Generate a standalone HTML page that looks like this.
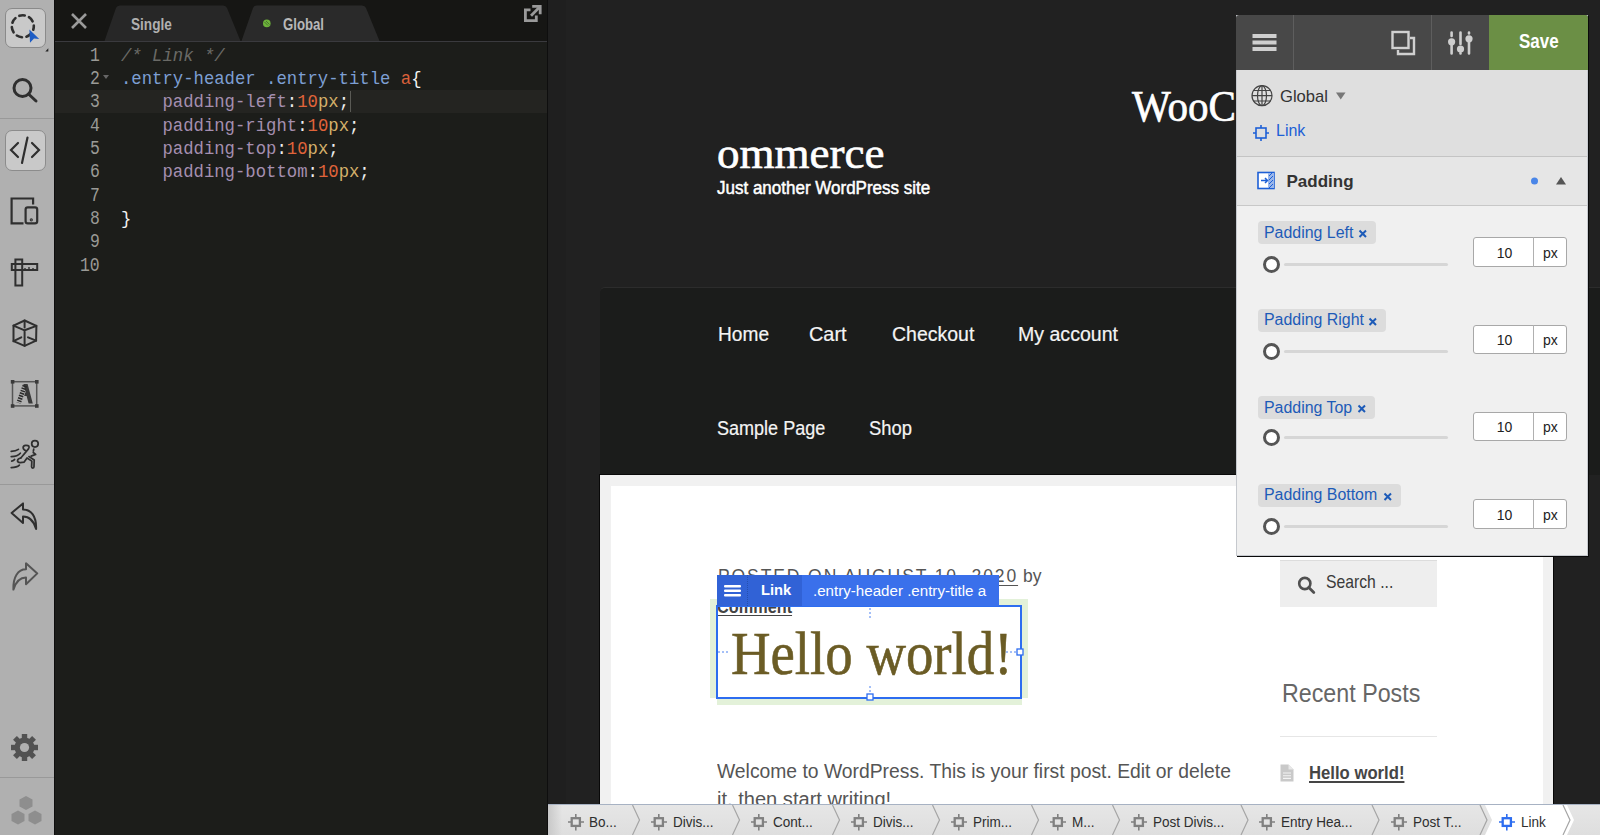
<!DOCTYPE html>
<html><head><meta charset="utf-8">
<style>
*{margin:0;padding:0;box-sizing:border-box}
html,body{width:1600px;height:835px;overflow:hidden;background:#202020;font-family:"Liberation Sans",sans-serif}
.a{position:absolute}
.t{position:absolute;white-space:nowrap;line-height:1}
</style></head>
<body>
<div class="a" style="left:548px;top:0px;width:1052px;height:804px;background:#212121"></div>
<div class="a" style="left:548px;top:0px;width:18px;height:804px;background:#1f1f1f"></div>
<div class="a" style="left:55px;top:0px;width:493px;height:835px;background:#1c1d1a"></div>
<div class="a" style="left:55px;top:0px;width:493px;height:42px;background:#161614;border-bottom:1px solid #3a3a3e"></div>
<div class="a" style="left:547px;top:0px;width:1px;height:835px;background:#0e0e0e"></div>
<svg class="a" style="left:0;top:0" width="548" height="42"><path d="M104.5 41 L116 8 Q117 5.5 120 5.5 L223 5.5 Q226 5.5 227 8 L240.5 41 Z" fill="#272727"/><path d="M241.5 41 L253 8 Q254 5.5 257 5.5 L362 5.5 Q365 5.5 366 8 L379.5 41 Z" fill="#2a2a2a"/><path d="M72 14 L86 28 M86 14 L72 28" stroke="#9a9a9a" stroke-width="2.6"/><g fill="none" stroke="#9a9a9a" stroke-width="2.8"><path d="M530.5 9.8 H525.4 V20.7 H536.3 V15.5"/><path d="M531 15.8 L539.2 7.6"/><path d="M532.2 6.4 H540.2 V14.3"/></g><circle cx="266.8" cy="23.4" r="3.8" fill="#6cb23a"/><path d="M264.5 22 L268 25.5 M266 21 L269.5 24.5" stroke="#3a5a28" stroke-width="0.7"/></svg>
<div class="t" style="left:131.00px;top:15.55px;font-size:17px;color:#b0b0b0;font-family:'Liberation Sans',sans-serif;font-weight:700;transform:scale(0.8000,1.0000);transform-origin:0 14.45px;">Single</div>
<div class="t" style="left:283.00px;top:15.55px;font-size:17px;color:#b8b8b8;font-family:'Liberation Sans',sans-serif;font-weight:700;transform:scale(0.7750,1.0000);transform-origin:0 14.45px;">Global</div>
<div class="a" style="left:55px;top:90px;width:492px;height:23px;background:#242421"></div>
<div class="t" style="left:89.86px;top:47.87px;font-size:17.27px;color:#9a9a96;font-family:'Liberation Mono',monospace;transform:scale(0.9500,1.1500);transform-origin:0 13.13px;">1</div>
<div class="t" style="left:121.00px;top:47.87px;font-size:17.27px;color:#ddd;font-family:'Liberation Mono',monospace;transform:scale(1.0000,1.1000);transform-origin:0 13.13px;white-space:pre;"><span style="color:#6a6a66;font-style:italic">/* Link */</span></div>
<div class="t" style="left:89.86px;top:71.17px;font-size:17.27px;color:#9a9a96;font-family:'Liberation Mono',monospace;transform:scale(0.9500,1.1500);transform-origin:0 13.13px;">2</div>
<div class="t" style="left:121.00px;top:71.17px;font-size:17.27px;color:#ddd;font-family:'Liberation Mono',monospace;transform:scale(1.0000,1.1000);transform-origin:0 13.13px;white-space:pre;"><span style="color:#7d9fd3">.entry-header .entry-title </span><span style="color:#d9603b">a</span><span style="color:#f2f2f2">{</span></div>
<div class="t" style="left:89.86px;top:94.47px;font-size:17.27px;color:#9a9a96;font-family:'Liberation Mono',monospace;transform:scale(0.9500,1.1500);transform-origin:0 13.13px;">3</div>
<div class="t" style="left:121.00px;top:94.47px;font-size:17.27px;color:#ddd;font-family:'Liberation Mono',monospace;transform:scale(1.0000,1.1000);transform-origin:0 13.13px;white-space:pre;">    <span style="color:#a58fb0">padding-left</span><span style="color:#eee">:</span><span style="color:#e0643a">10</span><span style="color:#d4b06a">px</span><span style="color:#eee">;</span></div>
<div class="t" style="left:89.86px;top:117.77px;font-size:17.27px;color:#9a9a96;font-family:'Liberation Mono',monospace;transform:scale(0.9500,1.1500);transform-origin:0 13.13px;">4</div>
<div class="t" style="left:121.00px;top:117.77px;font-size:17.27px;color:#ddd;font-family:'Liberation Mono',monospace;transform:scale(1.0000,1.1000);transform-origin:0 13.13px;white-space:pre;">    <span style="color:#a58fb0">padding-right</span><span style="color:#eee">:</span><span style="color:#e0643a">10</span><span style="color:#d4b06a">px</span><span style="color:#eee">;</span></div>
<div class="t" style="left:89.86px;top:141.07px;font-size:17.27px;color:#9a9a96;font-family:'Liberation Mono',monospace;transform:scale(0.9500,1.1500);transform-origin:0 13.13px;">5</div>
<div class="t" style="left:121.00px;top:141.07px;font-size:17.27px;color:#ddd;font-family:'Liberation Mono',monospace;transform:scale(1.0000,1.1000);transform-origin:0 13.13px;white-space:pre;">    <span style="color:#a58fb0">padding-top</span><span style="color:#eee">:</span><span style="color:#e0643a">10</span><span style="color:#d4b06a">px</span><span style="color:#eee">;</span></div>
<div class="t" style="left:89.86px;top:164.37px;font-size:17.27px;color:#9a9a96;font-family:'Liberation Mono',monospace;transform:scale(0.9500,1.1500);transform-origin:0 13.13px;">6</div>
<div class="t" style="left:121.00px;top:164.37px;font-size:17.27px;color:#ddd;font-family:'Liberation Mono',monospace;transform:scale(1.0000,1.1000);transform-origin:0 13.13px;white-space:pre;">    <span style="color:#a58fb0">padding-bottom</span><span style="color:#eee">:</span><span style="color:#e0643a">10</span><span style="color:#d4b06a">px</span><span style="color:#eee">;</span></div>
<div class="t" style="left:89.86px;top:187.67px;font-size:17.27px;color:#9a9a96;font-family:'Liberation Mono',monospace;transform:scale(0.9500,1.1500);transform-origin:0 13.13px;">7</div>
<div class="t" style="left:89.86px;top:210.97px;font-size:17.27px;color:#9a9a96;font-family:'Liberation Mono',monospace;transform:scale(0.9500,1.1500);transform-origin:0 13.13px;">8</div>
<div class="t" style="left:121.00px;top:210.97px;font-size:17.27px;color:#ddd;font-family:'Liberation Mono',monospace;transform:scale(1.0000,1.1000);transform-origin:0 13.13px;white-space:pre;"><span style="color:#f2f2f2">}</span></div>
<div class="t" style="left:89.86px;top:234.27px;font-size:17.27px;color:#9a9a96;font-family:'Liberation Mono',monospace;transform:scale(0.9500,1.1500);transform-origin:0 13.13px;">9</div>
<div class="t" style="left:80.02px;top:257.57px;font-size:17.27px;color:#9a9a96;font-family:'Liberation Mono',monospace;transform:scale(0.9500,1.1500);transform-origin:0 13.13px;">10</div>
<svg class="a" style="left:0;top:0" width="120" height="90"><path d="M103 75 L109 75 L106 79 Z" fill="#666"/></svg>
<div class="a" style="left:350px;top:91px;width:1px;height:21px;background:#5a5a55"></div>
<div class="a" style="left:0px;top:0px;width:54px;height:835px;background:#b0b0b0"></div>
<div class="a" style="left:54px;top:0px;width:1.2px;height:835px;background:#0e0e0e"></div>
<div class="a" style="left:0px;top:118px;width:54px;height:1px;background:#999"></div>
<div class="a" style="left:0px;top:484px;width:54px;height:1px;background:#999"></div>
<div class="a" style="left:0px;top:777px;width:54px;height:1px;background:#999"></div>
<div class="a" style="left:4.5px;top:7.8px;width:41px;height:40.5px;background:#c9c9c9;border:1.3px solid #8a8a8a;border-radius:7px"></div>
<div class="a" style="left:5px;top:130px;width:41px;height:41px;background:#c9c9c9;border:1px solid #8c8c8c;border-radius:7px"></div>
<svg class="a" style="left:0;top:0" width="54" height="835">
<g fill="none" stroke="#2f2f2f" stroke-width="2.4" stroke-linecap="round">
 <circle cx="22.8" cy="26.3" r="11" stroke-dasharray="5.5 4.5" stroke-dashoffset="2" stroke-width="2.6"/>
</g>
<path d="M29.4 29.6 L39.2 38.9 L34 38.6 L30 42.7 Z" fill="#1d5cc4"/>
<path d="M45.3 51.5 L48.3 48.2 L48.3 51.5 Z" fill="#222"/>
<g fill="none" stroke="#2f2f2f" stroke-width="3">
 <circle cx="22.5" cy="88" r="8.5"/><path d="M28.5 94 L36 101" stroke-linecap="round"/>
</g>
<g fill="none" stroke="#2f2f2f" stroke-width="2.2" stroke-linecap="round">
 <path d="M18 143 L11 150 L18 157"/><path d="M32 143 L39 150 L32 157"/><path d="M27.5 137.5 L22 163"/>
</g>
<g fill="none" stroke="#2f2f2f" stroke-width="2.2">
 <path d="M33.1 204.4 V198.5 H11.6 V223.4 H23.5"/>
 <rect x="25.6" y="207.4" width="11.6" height="16" rx="2.2"/>
 <circle cx="31.3" cy="219.8" r="0.5" fill="#2f2f2f"/>
</g>
<g fill="none" stroke="#2f2f2f" stroke-width="2">
 <rect x="15.4" y="259.5" width="6.8" height="26"/>
 <rect x="11.8" y="264" width="25.4" height="6"/>
 <path d="M25 270 V268 M29 270 V267 M33 270 V268" stroke-width="1.4"/>
</g>
<g fill="none" stroke="#2f2f2f" stroke-width="2" stroke-linejoin="round" stroke-linecap="round">
 <path d="M24.6 320.5 L36.4 325.9 L36.1 340.7 L24.6 345.8 L13.5 341.2 L13.5 325.6 Z"/>
 <path d="M13.5 325.6 L24.6 330.3 L36.4 325.9 M24.6 330.3 V345.8 M24.6 320.5 V327.5 M13.5 341.2 L21.3 337.3 M36.1 340.7 L28 337.3"/>
</g>
<g fill="none" stroke="#555" stroke-width="1.5">
 <rect x="12.5" y="381.7" width="24.2" height="24.2"/>
</g>
<g fill="#3a3a3a">
 <rect x="10.8" y="380" width="3.6" height="3.6"/><rect x="35" y="380" width="3.6" height="3.6"/><rect x="10.8" y="404.2" width="3.6" height="3.6"/><rect x="35" y="404.2" width="3.6" height="3.6"/>
 <path d="M23.4 384 L27.6 384 L32.8 403.6 L28.6 403.6 L26.6 396 L24.2 396 L25.2 392.5 L25.8 392.5 Z"/>
</g>
<path d="M24.8 385.5 L18.6 403" stroke="#2a2a2a" stroke-width="4.6" stroke-dasharray="1.5 1.1" fill="none"/>
<g fill="none" stroke="#2f2f2f" stroke-width="36" stroke-linecap="round" stroke-linejoin="round" transform="translate(5 435) scale(0.0479)">
 <circle cx="625" cy="185" r="68"/>
 <path d="M600 295 L592 335 M590 365 L640 405 L545 440"/>
 <path d="M440 330 C 360 300, 360 220, 430 215 C 500 210, 520 240, 490 290 L 330 480"/>
 <path d="M330 480 C 240 500, 240 580, 320 575 L 400 565 L 460 480 L 560 545 L 555 665 C 555 700, 605 700, 605 665 L 610 520 L 500 450"/>
 <path d="M130 340 C 180 340, 240 330, 280 300 M130 450 C 190 450, 270 440, 320 380 M140 545 C 170 540, 190 525, 200 510 M130 680 C 190 680, 260 670, 300 630"/>
</g>
<g fill="none" stroke="#2f2f2f" stroke-width="2" stroke-linejoin="round">
 <path d="M11.6 513 L23 503.4 L23 509.4 C31 509.4 36.6 516 36.1 529 C33.5 520.5 29 516.6 23 516.6 L23 523 Z"/>
</g>
<g fill="none" stroke="#555" stroke-width="2" stroke-linejoin="round">
 <path d="M37.3 573.4 L26 563.3 L26 569.3 C18 569.3 12.9 577 13.4 589.6 C16 581.5 20.5 577.6 26 577.6 L26 584.2 Z"/>
</g>
<g fill="#525252" transform="translate(24.5 747.5)"><circle r="10"/><rect x="-2.7" y="-13.5" width="5.4" height="6" transform="rotate(0)"/><rect x="-2.7" y="-13.5" width="5.4" height="6" transform="rotate(45)"/><rect x="-2.7" y="-13.5" width="5.4" height="6" transform="rotate(90)"/><rect x="-2.7" y="-13.5" width="5.4" height="6" transform="rotate(135)"/><rect x="-2.7" y="-13.5" width="5.4" height="6" transform="rotate(180)"/><rect x="-2.7" y="-13.5" width="5.4" height="6" transform="rotate(225)"/><rect x="-2.7" y="-13.5" width="5.4" height="6" transform="rotate(270)"/><rect x="-2.7" y="-13.5" width="5.4" height="6" transform="rotate(315)"/><circle r="4.6" fill="#b0b0b0"/></g>
<g fill="#8e8e8e">
 <path d="M26 796 L32.5 799.5 V806.5 L26 810 L19.5 806.5 V799.5 Z"/>
 <path d="M18 810.5 L24.5 814 V821 L18 824.5 L11.5 821 V814 Z"/>
 <path d="M35 810.5 L41.5 814 V821 L35 824.5 L28.5 821 V814 Z"/>
</g>
</svg>
<div class="t" style="left:1132.00px;top:84.25px;font-size:45px;color:#ffffff;font-family:'Liberation Serif',serif;transform:scale(0.9130,1.0000);transform-origin:0 37.35px;-webkit-text-stroke:0.7px #fff;">WooC</div>
<div class="t" style="left:717.00px;top:130.95px;font-size:45px;color:#ffffff;font-family:'Liberation Serif',serif;transform:scale(1.0000,1.0000);transform-origin:0 37.35px;-webkit-text-stroke:0.7px #fff;">ommerce</div>
<div class="t" style="left:717.00px;top:179.44px;font-size:18.3px;color:#ffffff;font-family:'Liberation Sans',sans-serif;transform:scale(0.9300,1.0000);transform-origin:0 15.55px;-webkit-text-stroke:0.5px #fff;">Just another WordPress site</div>
<div class="a" style="left:600px;top:287px;width:1000px;height:188px;background:#1b1c1b;border-top:1px solid #2c2c2c;border-top-left-radius:5px"></div>
<div class="t" style="left:717.50px;top:324.07px;font-size:20.5px;color:#f4f4f4;font-family:'Liberation Sans',sans-serif;transform:scale(0.9335,1.0000);transform-origin:0 17.43px;-webkit-text-stroke:0.2px #f4f4f4;">Home</div>
<div class="t" style="left:809.00px;top:324.07px;font-size:20.5px;color:#f4f4f4;font-family:'Liberation Sans',sans-serif;transform:scale(0.9704,1.0000);transform-origin:0 17.43px;-webkit-text-stroke:0.2px #f4f4f4;">Cart</div>
<div class="t" style="left:891.50px;top:324.07px;font-size:20.5px;color:#f4f4f4;font-family:'Liberation Sans',sans-serif;transform:scale(0.9502,1.0000);transform-origin:0 17.43px;-webkit-text-stroke:0.2px #f4f4f4;">Checkout</div>
<div class="t" style="left:1018.00px;top:324.07px;font-size:20.5px;color:#f4f4f4;font-family:'Liberation Sans',sans-serif;transform:scale(0.9537,1.0000);transform-origin:0 17.43px;-webkit-text-stroke:0.2px #f4f4f4;">My account</div>
<div class="t" style="left:717.00px;top:418.38px;font-size:20.5px;color:#f4f4f4;font-family:'Liberation Sans',sans-serif;transform:scale(0.8798,1.0000);transform-origin:0 17.43px;-webkit-text-stroke:0.2px #f4f4f4;">Sample Page</div>
<div class="t" style="left:869.00px;top:418.38px;font-size:20.5px;color:#f4f4f4;font-family:'Liberation Sans',sans-serif;transform:scale(0.8983,1.0000);transform-origin:0 17.43px;-webkit-text-stroke:0.2px #f4f4f4;">Shop</div>
<div class="a" style="left:600px;top:474px;width:953px;height:330px;background:#f1f1f1;border-top:1px solid #0a0a0a"></div>
<div class="a" style="left:611px;top:486px;width:932px;height:318px;background:#ffffff"></div>
<div class="a" style="left:599px;top:474px;width:1.3px;height:330px;background:#080808"></div>
<div class="t" style="left:718.00px;top:567.62px;font-size:17.5px;color:#555555;font-family:'Liberation Sans',sans-serif;letter-spacing:1.9px;">POSTED ON <span style="text-decoration:underline;text-underline-offset:3px">AUGUST 10, 2020</span><span style="letter-spacing:0"> by</span></div>
<div class="a" style="left:710px;top:599px;width:318px;height:99px;background:#e3f1d9"></div>
<div class="a" style="left:717px;top:698px;width:305px;height:7px;background:#e3f1d9"></div>
<div class="a" style="left:717px;top:606px;width:305px;height:93px;background:#ffffff"></div>
<div class="t" style="left:717.00px;top:598.62px;font-size:17.5px;color:#444;font-family:'Liberation Sans',sans-serif;font-weight:700;transform:scale(0.9300,1.0000);transform-origin:0 14.88px;"><span style="text-decoration:underline;text-underline-offset:2px">Comment</span></div>
<div class="t" style="left:730.50px;top:622.57px;font-size:61px;color:#6b5c25;font-family:'Liberation Serif',serif;transform:scale(0.8980,1.0000);transform-origin:0 50.63px;-webkit-text-stroke:0.6px #6b5c25;">Hello world!</div>
<div class="a" style="left:716px;top:605px;width:306px;height:94px;border:2.5px solid #2d6df0"></div>
<svg class="a" style="left:700px;top:590px" width="340" height="120">
<g stroke="#4a80f0" stroke-width="1" stroke-dasharray="2 2" fill="none">
<path d="M170 18 V28"/><path d="M170 96 V106"/><path d="M18 62 H30"/><path d="M306 62 H318"/>
</g>
<rect x="317" y="59" width="6" height="6" fill="#fff" stroke="#2d6df0" stroke-width="1.3"/>
<rect x="167" y="104" width="6" height="6" fill="#fff" stroke="#2d6df0" stroke-width="1.3"/>
</svg>
<div class="a" style="left:717px;top:574.5px;width:281.5px;height:31.5px;background:#3a70eb"></div>
<div class="a" style="left:717px;top:574.5px;width:84.5px;height:31.5px;background:#3162d6"></div>
<div class="a" style="left:747px;top:575px;width:1px;height:31px;border-left:1px dotted #2550b0"></div>
<svg class="a" style="left:717px;top:575px" width="32" height="31"><g fill="#fff"><rect x="7" y="10" width="17" height="2.6" rx="1"/><rect x="7" y="14.5" width="17" height="2.6" rx="1"/><rect x="7" y="19" width="17" height="2.6" rx="1"/></g></svg>
<div class="t" style="left:761.00px;top:582.33px;font-size:15.5px;color:#ffffff;font-family:'Liberation Sans',sans-serif;font-weight:700;transform:scale(0.9500,1.0000);transform-origin:0 13.17px;">Link</div>
<div class="t" style="left:812.50px;top:583.60px;font-size:14px;color:#ffffff;font-family:'Liberation Sans',sans-serif;transform:scale(1.0800,1.0000);transform-origin:0 11.90px;">.entry-header .entry-title a</div>
<div class="t" style="left:717.00px;top:761.62px;font-size:19.5px;color:#555555;font-family:'Liberation Sans',sans-serif;transform:scale(0.9900,1.0000);transform-origin:0 16.57px;">Welcome to WordPress. This is your first post. Edit or delete</div>
<div class="t" style="left:717.00px;top:790.42px;font-size:19.5px;color:#555555;font-family:'Liberation Sans',sans-serif;transform:scale(1.0300,1.0000);transform-origin:0 16.57px;">it, then start writing!</div>
<div class="a" style="left:1280px;top:560px;width:157px;height:47px;background:#eeeeee;border-top:1px solid #dcdcdc"></div>
<svg class="a" style="left:1290px;top:570px" width="30" height="30"><circle cx="14.8" cy="13.5" r="5.6" fill="none" stroke="#505050" stroke-width="2.6"/><path d="M18.8 17.6 L23.8 22.6" stroke="#505050" stroke-width="2.8" stroke-linecap="round"/></svg>
<div class="t" style="left:1325.50px;top:574.07px;font-size:17.8px;color:#3a3a3a;font-family:'Liberation Sans',sans-serif;transform:scale(0.8850,1.0000);transform-origin:0 15.13px;">Search ...</div>
<div class="t" style="left:1281.50px;top:680.55px;font-size:25px;color:#666666;font-family:'Liberation Sans',sans-serif;transform:scale(0.9300,1.0000);transform-origin:0 21.25px;">Recent Posts</div>
<div class="a" style="left:1280px;top:736px;width:157px;height:1px;background:#e6e6e6"></div>
<svg class="a" style="left:1280px;top:764px" width="15" height="19"><path d="M0.5 0.5 H8.5 L13.5 5.5 V17.5 H0.5 Z" fill="#c9c9c9"/><path d="M8.5 0.5 V5.5 H13.5" fill="#e8e8e8"/><path d="M3 9 H11 M3 11.7 H11 M3 14.4 H11" stroke="#f4f4f4" stroke-width="1.1"/></svg>
<div class="t" style="left:1309.00px;top:765.12px;font-size:17.5px;color:#454545;font-family:'Liberation Sans',sans-serif;font-weight:700;transform:scale(0.9530,1.0000);transform-origin:0 14.88px;"><span style="text-decoration:underline;text-underline-offset:2px;text-decoration-thickness:1.5px">Hello world!</span></div>
<div class="a" style="left:1553px;top:486px;width:47px;height:318px;background:#212121"></div>
<div class="a" style="left:1543px;top:486px;width:10px;height:318px;background:#f1f1f1"></div>
<div class="a" style="left:1553px;top:474px;width:1.3px;height:330px;background:#080808"></div>
<div class="a" style="left:1236px;top:15px;width:352px;height:541px;background:#f0f0f0;border:1px solid #c6c9ce;border-top:none;box-shadow:1px 1px 0 #0a0a0a"></div>
<div class="a" style="left:1236px;top:15px;width:352px;height:55px;background:#484848;border-radius:3px 3px 0 0"></div>
<div class="a" style="left:1292.5px;top:15px;width:1.5px;height:55px;background:#5e5e5e"></div>
<div class="a" style="left:1430.5px;top:15px;width:1.5px;height:55px;background:#5e5e5e"></div>
<div class="a" style="left:1489px;top:15px;width:99px;height:55px;background:#6b8f45;border-top-right-radius:3px"></div>
<svg class="a" style="left:1236px;top:15px" width="352" height="56">
<g fill="#cfcfcf"><rect x="16.5" y="19" width="24" height="4"/><rect x="16.5" y="25.5" width="24" height="4"/><rect x="16.5" y="32" width="24" height="4"/></g>
<g fill="none" stroke="#d0d0d0" stroke-width="2.4">
<rect x="156.5" y="17" width="16" height="16"/>
<path d="M174 23 H178 V39 H162 V35"/>
</g>
<g stroke="#cfcfcf" stroke-width="2.6" stroke-linecap="round" fill="#cfcfcf">
<path d="M215.6 17.5 V21 M215.6 30 V38.5"/><circle cx="215.6" cy="26.8" r="3.6" stroke="none"/>
<path d="M224.5 17.5 V29 M224.5 38 V38.5"/><circle cx="224.5" cy="34" r="3.6" stroke="none"/>
<path d="M233 17.5 V18.5 M233 27 V38.5"/><circle cx="233" cy="23.8" r="3.6" stroke="none"/>
</g>
</svg>
<div class="t" style="left:1518.60px;top:31.72px;font-size:19.5px;color:#ffffff;font-family:'Liberation Sans',sans-serif;font-weight:700;transform:scale(0.8700,1.0000);transform-origin:0 16.57px;">Save</div>
<div class="a" style="left:1237px;top:70px;width:350px;height:86px;background:#dfdfdf"></div>
<div class="a" style="left:1237px;top:156px;width:350px;height:1px;background:#c4c4c4"></div>
<div class="a" style="left:1237px;top:157px;width:350px;height:48px;background:#e6e6e6"></div>
<div class="a" style="left:1237px;top:205px;width:350px;height:1px;background:#c8c8c8"></div>
<svg class="a" style="left:1236px;top:70px" width="352" height="140">
<g fill="none" stroke="#444" stroke-width="1.2">
<circle cx="26" cy="25.7" r="10"/><ellipse cx="26" cy="25.7" rx="4.5" ry="10"/><path d="M26 15.7 V35.7 M16 25.7 H36 M17.5 20.5 H34.5 M17.5 31 H34.5"/>
</g>
<path d="M100 22.6 L109.5 22.6 L104.75 29.5 Z" fill="#777"/>
<g fill="none" stroke="#1d5fd6" stroke-width="1.6">
<rect x="20" y="58" width="10" height="10"/>
<path d="M17 63 H20 M30 63 H33 M25 55 V58 M25 68 V71"/>
</g>
<g>
<rect x="22" y="102.5" width="16" height="16" fill="#fff" stroke="#1d5fd6" stroke-width="1.6"/>
<path d="M32 103 L38 103 L38 118 L32 118 Z" fill="#9ab6ea"/>
<path d="M33 106 L37 102 M33 110 L37 106 M33 114 L37 110 M33 118 L37 114" stroke="#1d5fd6" stroke-width="1"/>
<path d="M25 110.5 H31 M29 108 L31.5 110.5 L29 113" stroke="#1d5fd6" stroke-width="1.5" fill="none"/>
</g>
<circle cx="298.5" cy="111" r="3.5" fill="#4a86e8"/>
<path d="M320 114.5 L330 114.5 L325 107 Z" fill="#555"/>
</svg>
<div class="t" style="left:1280.00px;top:87.55px;font-size:17px;color:#333333;font-family:'Liberation Sans',sans-serif;transform:scale(0.9770,1.0000);transform-origin:0 14.45px;">Global</div>
<div class="t" style="left:1276.00px;top:123.20px;font-size:16px;color:#1d5fd6;font-family:'Liberation Sans',sans-serif;">Link</div>
<div class="t" style="left:1286.50px;top:172.55px;font-size:17px;color:#333333;font-family:'Liberation Sans',sans-serif;font-weight:700;">Padding</div>
<div class="a" style="left:1258px;top:221.2px;width:118px;height:23px;background:#dcdcdc;border-radius:4px"></div>
<div class="t" style="left:1263.50px;top:224.60px;font-size:16px;color:#1d5bb8;font-family:'Liberation Sans',sans-serif;transform:scale(0.9940,1.0000);transform-origin:0 13.60px;">Padding Left</div>
<svg class="a" style="left:1358px;top:229.2px" width="10" height="10"><path d="M1.5 1.5 L8 8 M8 1.5 L1.5 8" stroke="#1d5bb8" stroke-width="2"/></svg>
<div class="a" style="left:1284px;top:262.8px;width:164px;height:3px;background:#d6d6d6;border-radius:2px"></div>
<div class="a" style="left:1262.5px;top:255.8px;width:17px;height:17px;background:#fff;border:3px solid #555;border-radius:50%"></div>
<div class="a" style="left:1473px;top:237.2px;width:94px;height:29.4px;background:#fff;border:1.2px solid #a8a8a8;border-radius:3px"></div>
<div class="a" style="left:1533px;top:237.2px;width:1.2px;height:29.4px;background:#b0b0b0"></div>
<div class="t" style="left:1496.80px;top:245.60px;font-size:14px;color:#222;font-family:'Liberation Sans',sans-serif;">10</div>
<div class="t" style="left:1543.00px;top:245.60px;font-size:14px;color:#222;font-family:'Liberation Sans',sans-serif;">px</div>
<div class="a" style="left:1258px;top:308.8px;width:128px;height:23px;background:#dcdcdc;border-radius:4px"></div>
<div class="t" style="left:1263.50px;top:312.20px;font-size:16px;color:#1d5bb8;font-family:'Liberation Sans',sans-serif;transform:scale(0.9940,1.0000);transform-origin:0 13.60px;">Padding Right</div>
<svg class="a" style="left:1368px;top:316.8px" width="10" height="10"><path d="M1.5 1.5 L8 8 M8 1.5 L1.5 8" stroke="#1d5bb8" stroke-width="2"/></svg>
<div class="a" style="left:1284px;top:350.0px;width:164px;height:3px;background:#d6d6d6;border-radius:2px"></div>
<div class="a" style="left:1262.5px;top:343.0px;width:17px;height:17px;background:#fff;border:3px solid #555;border-radius:50%"></div>
<div class="a" style="left:1473px;top:324.5px;width:94px;height:29.4px;background:#fff;border:1.2px solid #a8a8a8;border-radius:3px"></div>
<div class="a" style="left:1533px;top:324.5px;width:1.2px;height:29.4px;background:#b0b0b0"></div>
<div class="t" style="left:1496.80px;top:332.90px;font-size:14px;color:#222;font-family:'Liberation Sans',sans-serif;">10</div>
<div class="t" style="left:1543.00px;top:332.90px;font-size:14px;color:#222;font-family:'Liberation Sans',sans-serif;">px</div>
<div class="a" style="left:1258px;top:396.4px;width:117px;height:23px;background:#dcdcdc;border-radius:4px"></div>
<div class="t" style="left:1263.50px;top:399.80px;font-size:16px;color:#1d5bb8;font-family:'Liberation Sans',sans-serif;transform:scale(0.9940,1.0000);transform-origin:0 13.60px;">Padding Top</div>
<svg class="a" style="left:1357px;top:404.4px" width="10" height="10"><path d="M1.5 1.5 L8 8 M8 1.5 L1.5 8" stroke="#1d5bb8" stroke-width="2"/></svg>
<div class="a" style="left:1284px;top:436.4px;width:164px;height:3px;background:#d6d6d6;border-radius:2px"></div>
<div class="a" style="left:1262.5px;top:429.4px;width:17px;height:17px;background:#fff;border:3px solid #555;border-radius:50%"></div>
<div class="a" style="left:1473px;top:411.8px;width:94px;height:29.4px;background:#fff;border:1.2px solid #a8a8a8;border-radius:3px"></div>
<div class="a" style="left:1533px;top:411.8px;width:1.2px;height:29.4px;background:#b0b0b0"></div>
<div class="t" style="left:1496.80px;top:420.20px;font-size:14px;color:#222;font-family:'Liberation Sans',sans-serif;">10</div>
<div class="t" style="left:1543.00px;top:420.20px;font-size:14px;color:#222;font-family:'Liberation Sans',sans-serif;">px</div>
<div class="a" style="left:1258px;top:484px;width:143px;height:23px;background:#dcdcdc;border-radius:4px"></div>
<div class="t" style="left:1263.50px;top:487.40px;font-size:16px;color:#1d5bb8;font-family:'Liberation Sans',sans-serif;transform:scale(0.9940,1.0000);transform-origin:0 13.60px;">Padding Bottom</div>
<svg class="a" style="left:1383px;top:492px" width="10" height="10"><path d="M1.5 1.5 L8 8 M8 1.5 L1.5 8" stroke="#1d5bb8" stroke-width="2"/></svg>
<div class="a" style="left:1284px;top:524.5px;width:164px;height:3px;background:#d6d6d6;border-radius:2px"></div>
<div class="a" style="left:1262.5px;top:517.5px;width:17px;height:17px;background:#fff;border:3px solid #555;border-radius:50%"></div>
<div class="a" style="left:1473px;top:499.2px;width:94px;height:29.4px;background:#fff;border:1.2px solid #a8a8a8;border-radius:3px"></div>
<div class="a" style="left:1533px;top:499.2px;width:1.2px;height:29.4px;background:#b0b0b0"></div>
<div class="t" style="left:1496.80px;top:507.60px;font-size:14px;color:#222;font-family:'Liberation Sans',sans-serif;">10</div>
<div class="t" style="left:1543.00px;top:507.60px;font-size:14px;color:#222;font-family:'Liberation Sans',sans-serif;">px</div>
<div class="a" style="left:548px;top:804px;width:1052px;height:31px;background:linear-gradient(#e6e6e6,#dedede);border-top:1px solid #a7b2c3"></div>
<div class="a" style="left:548px;top:805px;width:14px;height:30px;background:linear-gradient(90deg,#c8c8c8,rgba(222,222,222,0))"></div>
<svg class="a" style="left:1477px;top:805px" width="100" height="30"><path d="M8 0 L90 0 L97 15 L90 30 L8 30 L15 15 Z" fill="#ffffff"/></svg>
<svg class="a" style="left:548px;top:805px" width="1052" height="30"><g fill="none" stroke="#a5a5a5" stroke-width="1.2"><path d="M84.5 0 L91.5 15 L84.5 30"/><path d="M184.5 0 L191.5 15 L184.5 30"/><path d="M284.5 0 L291.5 15 L284.5 30"/><path d="M384.5 0 L391.5 15 L384.5 30"/><path d="M483.5 0 L490.5 15 L483.5 30"/><path d="M564.5 0 L571.5 15 L564.5 30"/><path d="M693 0 L700 15 L693 30"/><path d="M824 0 L831 15 L824 30"/><path d="M932 0 L939 15 L932 30"/><path d="M1015 0 L1022 15 L1015 30"/></g></svg>
<svg class="a" style="left:567.5px;top:814px" width="17" height="17"><g fill="none" stroke="#808080" stroke-width="2.3"><rect x="3.7" y="4.2" width="8.2" height="7.7"/><path d="M0 8 H3 M12.5 8 H16 M7.8 0 V3.2 M7.8 13 V16.5" stroke-width="1.6"/></g></svg>
<div class="t" style="left:589.00px;top:816.27px;font-size:13.8px;color:#2e2e2e;font-family:'Liberation Sans',sans-serif;transform:scale(0.9800,1.0000);transform-origin:0 11.73px;">Bo...</div>
<svg class="a" style="left:651px;top:814px" width="17" height="17"><g fill="none" stroke="#808080" stroke-width="2.3"><rect x="3.7" y="4.2" width="8.2" height="7.7"/><path d="M0 8 H3 M12.5 8 H16 M7.8 0 V3.2 M7.8 13 V16.5" stroke-width="1.6"/></g></svg>
<div class="t" style="left:672.50px;top:816.27px;font-size:13.8px;color:#2e2e2e;font-family:'Liberation Sans',sans-serif;transform:scale(0.9800,1.0000);transform-origin:0 11.73px;">Divis...</div>
<svg class="a" style="left:751px;top:814px" width="17" height="17"><g fill="none" stroke="#808080" stroke-width="2.3"><rect x="3.7" y="4.2" width="8.2" height="7.7"/><path d="M0 8 H3 M12.5 8 H16 M7.8 0 V3.2 M7.8 13 V16.5" stroke-width="1.6"/></g></svg>
<div class="t" style="left:772.50px;top:816.27px;font-size:13.8px;color:#2e2e2e;font-family:'Liberation Sans',sans-serif;transform:scale(0.9800,1.0000);transform-origin:0 11.73px;">Cont...</div>
<svg class="a" style="left:851px;top:814px" width="17" height="17"><g fill="none" stroke="#808080" stroke-width="2.3"><rect x="3.7" y="4.2" width="8.2" height="7.7"/><path d="M0 8 H3 M12.5 8 H16 M7.8 0 V3.2 M7.8 13 V16.5" stroke-width="1.6"/></g></svg>
<div class="t" style="left:872.50px;top:816.27px;font-size:13.8px;color:#2e2e2e;font-family:'Liberation Sans',sans-serif;transform:scale(0.9800,1.0000);transform-origin:0 11.73px;">Divis...</div>
<svg class="a" style="left:951px;top:814px" width="17" height="17"><g fill="none" stroke="#808080" stroke-width="2.3"><rect x="3.7" y="4.2" width="8.2" height="7.7"/><path d="M0 8 H3 M12.5 8 H16 M7.8 0 V3.2 M7.8 13 V16.5" stroke-width="1.6"/></g></svg>
<div class="t" style="left:972.50px;top:816.27px;font-size:13.8px;color:#2e2e2e;font-family:'Liberation Sans',sans-serif;transform:scale(0.9800,1.0000);transform-origin:0 11.73px;">Prim...</div>
<svg class="a" style="left:1050px;top:814px" width="17" height="17"><g fill="none" stroke="#808080" stroke-width="2.3"><rect x="3.7" y="4.2" width="8.2" height="7.7"/><path d="M0 8 H3 M12.5 8 H16 M7.8 0 V3.2 M7.8 13 V16.5" stroke-width="1.6"/></g></svg>
<div class="t" style="left:1071.50px;top:816.27px;font-size:13.8px;color:#2e2e2e;font-family:'Liberation Sans',sans-serif;transform:scale(0.9800,1.0000);transform-origin:0 11.73px;">M...</div>
<svg class="a" style="left:1131px;top:814px" width="17" height="17"><g fill="none" stroke="#808080" stroke-width="2.3"><rect x="3.7" y="4.2" width="8.2" height="7.7"/><path d="M0 8 H3 M12.5 8 H16 M7.8 0 V3.2 M7.8 13 V16.5" stroke-width="1.6"/></g></svg>
<div class="t" style="left:1152.50px;top:816.27px;font-size:13.8px;color:#2e2e2e;font-family:'Liberation Sans',sans-serif;transform:scale(0.9800,1.0000);transform-origin:0 11.73px;">Post Divis...</div>
<svg class="a" style="left:1259px;top:814px" width="17" height="17"><g fill="none" stroke="#808080" stroke-width="2.3"><rect x="3.7" y="4.2" width="8.2" height="7.7"/><path d="M0 8 H3 M12.5 8 H16 M7.8 0 V3.2 M7.8 13 V16.5" stroke-width="1.6"/></g></svg>
<div class="t" style="left:1280.50px;top:816.27px;font-size:13.8px;color:#2e2e2e;font-family:'Liberation Sans',sans-serif;transform:scale(0.9800,1.0000);transform-origin:0 11.73px;">Entry Hea...</div>
<svg class="a" style="left:1391px;top:814px" width="17" height="17"><g fill="none" stroke="#808080" stroke-width="2.3"><rect x="3.7" y="4.2" width="8.2" height="7.7"/><path d="M0 8 H3 M12.5 8 H16 M7.8 0 V3.2 M7.8 13 V16.5" stroke-width="1.6"/></g></svg>
<div class="t" style="left:1412.50px;top:816.27px;font-size:13.8px;color:#2e2e2e;font-family:'Liberation Sans',sans-serif;transform:scale(0.9800,1.0000);transform-origin:0 11.73px;">Post T...</div>
<svg class="a" style="left:1499px;top:814px" width="17" height="17"><g fill="none" stroke="#2d6df0" stroke-width="2.3"><rect x="3.7" y="4.2" width="8.2" height="7.7"/><path d="M0 8 H3 M12.5 8 H16 M7.8 0 V3.2 M7.8 13 V16.5" stroke-width="1.6"/></g></svg>
<div class="t" style="left:1520.50px;top:816.27px;font-size:13.8px;color:#2e2e2e;font-family:'Liberation Sans',sans-serif;transform:scale(0.9800,1.0000);transform-origin:0 11.73px;">Link</div>
</body></html>
